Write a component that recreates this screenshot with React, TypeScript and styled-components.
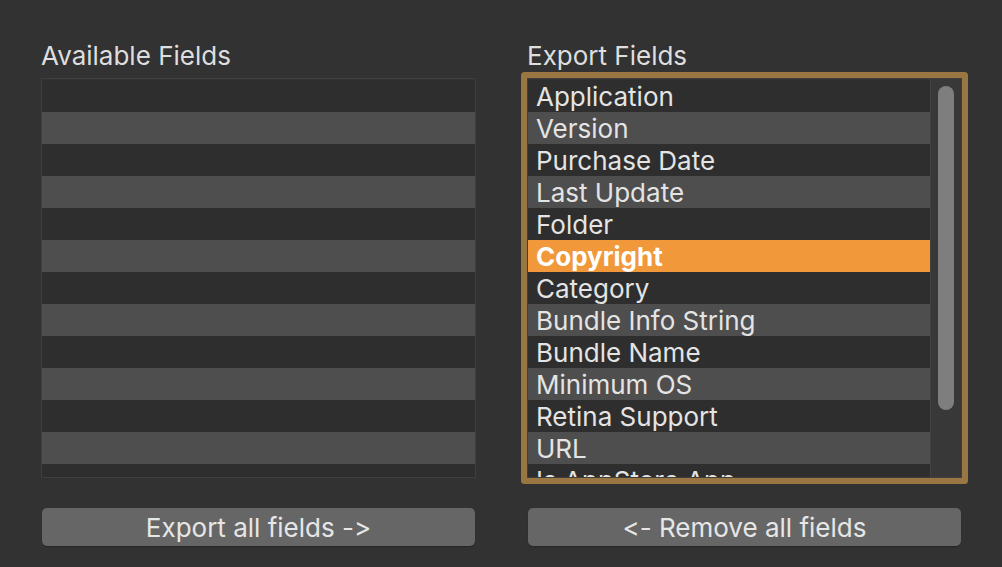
import React from "react";
import styled, { createGlobalStyle } from "styled-components";

const GlobalStyle = createGlobalStyle`
  html, body {
    margin: 0;
    padding: 0;
    background: #323232;
    font-family: Inter, "Noto Sans", sans-serif;
    font-variant-ligatures: none;
    font-feature-settings: "calt" 0, "liga" 0;
    -webkit-font-smoothing: antialiased;
  }
`;

const Page = styled.div`
  width: 1002px;
  height: 567px;
  box-sizing: border-box;
  padding: 40px 0 0 41px;
  display: grid;
  grid-template-columns: 435px 435px;
  column-gap: 51px;
  background: #323232;
`;

const Column = styled.div`
  display: flex;
  flex-direction: column;
`;

const Label = styled.div`
  font-size: 26px;
  line-height: 32px;
  color: #dedede;
  margin-bottom: 6px;
`;

const ListBox = styled.div<{ $focused?: boolean }>`
  height: 400px;
  box-sizing: border-box;
  border: 1px solid #3f3f3f;
  border-radius: 1px;
  display: flex;
  overflow: hidden;
  box-shadow: ${(p) => (p.$focused ? "0 0 0 6px #9a7642" : "none")};
`;

const Rows = styled.div`
  flex: 1;
  padding-top: 1px;
  overflow: hidden;
`;

const Row = styled.div<{ $odd: boolean; $selected?: boolean }>`
  height: 32px;
  line-height: 34px;
  padding-left: 8px;
  font-size: 26px;
  white-space: nowrap;
  overflow: hidden;
  color: ${(p) => (p.$selected ? "#ffffff" : "#e4e4e4")};
  font-weight: ${(p) => (p.$selected ? 700 : 400)};
  background: ${(p) =>
    p.$selected ? "#f0983a" : p.$odd ? "#4e4e4e" : "#2e2e2e"};
`;

const ScrollTrack = styled.div`
  width: 31px;
  box-sizing: border-box;
  padding: 7px 7px 0 7px;
  background: #383838;
  border-left: 1px solid #414141;
`;

const Thumb = styled.div`
  width: 16px;
  height: 324px;
  border-radius: 8px;
  background: #7e7e7e;
`;

const Button = styled.button`
  margin: 30px 1px 0;
  height: 38px;
  border: none;
  border-radius: 5px;
  background: #666666;
  color: #e6e6e6;
  font-family: Inter, "Noto Sans", sans-serif;
  font-variant-ligatures: none;
  font-feature-settings: "calt" 0, "liga" 0;
  font-size: 26px;
  line-height: 39px;
  padding: 0;
  box-shadow: 0 1px 1px rgba(0, 0, 0, 0.25);
`;

const exportFields = [
  "Application",
  "Version",
  "Purchase Date",
  "Last Update",
  "Folder",
  "Copyright",
  "Category",
  "Bundle Info String",
  "Bundle Name",
  "Minimum OS",
  "Retina Support",
  "URL",
  "Is AppStore App",
];

export default function App() {
  return (
    <>
      <GlobalStyle />
      <Page>
        <Column>
          <Label>Available Fields</Label>
          <ListBox>
            <Rows>
              {exportFields.map((_, i) => (
                <Row key={i} $odd={i % 2 === 1} />
              ))}
            </Rows>
          </ListBox>
          <Button>Export all fields -&gt;</Button>
        </Column>
        <Column>
          <Label>Export Fields</Label>
          <ListBox $focused>
            <Rows>
              {exportFields.map((name, i) => (
                <Row key={name} $odd={i % 2 === 1} $selected={name === "Copyright"}>
                  {name}
                </Row>
              ))}
            </Rows>
            <ScrollTrack>
              <Thumb />
            </ScrollTrack>
          </ListBox>
          <Button>&lt;- Remove all fields</Button>
        </Column>
      </Page>
    </>
  );
}
